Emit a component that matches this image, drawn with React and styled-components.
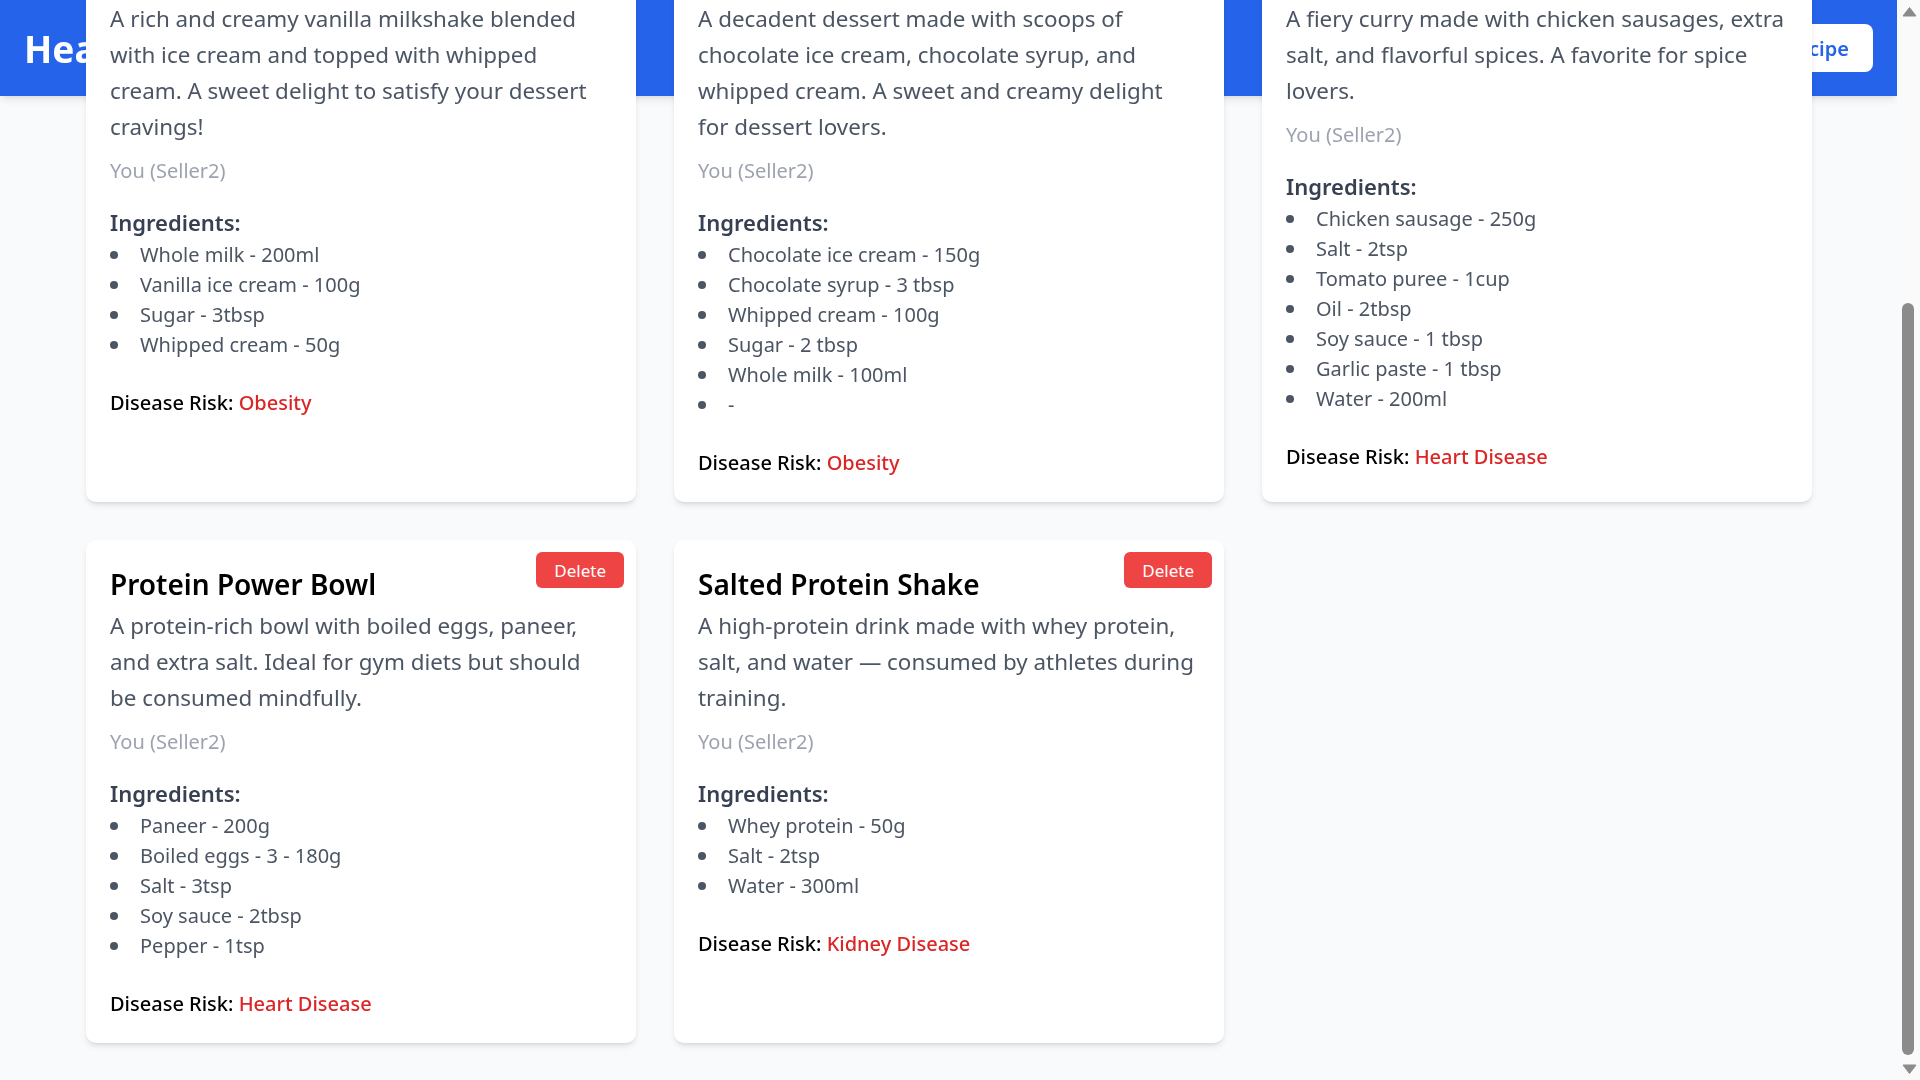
import { useLayoutEffect, useRef, useState } from 'react';
import styled, { createGlobalStyle } from 'styled-components';

const recipes = [
  {
    id: 1,
    title: 'Vanilla Milkshake',
    lines: [
      'A rich and creamy vanilla milkshake blended',
      'with ice cream and topped with whipped',
      'cream. A sweet delight to satisfy your dessert',
      'cravings!',
    ],
    ingredients: [
      ['Whole milk', '200ml'],
      ['Vanilla ice cream', '100g'],
      ['Sugar', '3tbsp'],
      ['Whipped cream', '50g'],
    ],
    risk: 'Obesity',
  },
  {
    id: 2,
    title: 'Chocolate Sundae',
    lines: [
      'A decadent dessert made with scoops of',
      'chocolate ice cream, chocolate syrup, and',
      'whipped cream. A sweet and creamy delight',
      'for dessert lovers.',
    ],
    ingredients: [
      ['Chocolate ice cream', '150g'],
      ['Chocolate syrup', '3 tbsp'],
      ['Whipped cream', '100g'],
      ['Sugar', '2 tbsp'],
      ['Whole milk', '100ml'],
      ['', ''],
    ],
    risk: 'Obesity',
  },
  {
    id: 3,
    title: 'Spicy Sausage Curry',
    lines: [
      'A fiery curry made with chicken sausages, extra',
      'salt, and flavorful spices. A favorite for spice',
      'lovers.',
    ],
    ingredients: [
      ['Chicken sausage', '250g'],
      ['Salt', '2tsp'],
      ['Tomato puree', '1cup'],
      ['Oil', '2tbsp'],
      ['Soy sauce', '1 tbsp'],
      ['Garlic paste', '1 tbsp'],
      ['Water', '200ml'],
    ],
    risk: 'Heart Disease',
  },
  {
    id: 4,
    title: 'Protein Power Bowl',
    lines: [
      'A protein-rich bowl with boiled eggs, paneer,',
      'and extra salt. Ideal for gym diets but should',
      'be consumed mindfully.',
    ],
    ingredients: [
      ['Paneer', '200g'],
      ['Boiled eggs - 3', '180g'],
      ['Salt', '3tsp'],
      ['Soy sauce', '2tbsp'],
      ['Pepper', '1tsp'],
    ],
    risk: 'Heart Disease',
  },
  {
    id: 5,
    title: 'Salted Protein Shake',
    lines: [
      'A high-protein drink made with whey protein,',
      'salt, and water — consumed by athletes during',
      'training.',
    ],
    ingredients: [
      ['Whey protein', '50g'],
      ['Salt', '2tsp'],
      ['Water', '300ml'],
    ],
    risk: 'Kidney Disease',
  },
];

const GlobalStyle = createGlobalStyle`
  * { box-sizing: border-box; }
  html, body { margin: 0; padding: 0; height: 100%; overflow: hidden; }
  body {
    font-family: "Noto Sans", "Open Sans", sans-serif;
    background: #f9fafb;
  }
  #root { height: 100%; }
`;

function RecipeCard({ recipe }) {
  return (
    <StyledCard>
      <StyledDelete type="button">Delete</StyledDelete>
      <StyledTitle>{recipe.title}</StyledTitle>
      <StyledDesc>
        {recipe.lines.map((line, i) => (
          <span key={i}>
            {line}
            {i < recipe.lines.length - 1 && <br />}
          </span>
        ))}
      </StyledDesc>
      <StyledSeller>You (Seller2)</StyledSeller>
      <StyledIngTitle>Ingredients:</StyledIngTitle>
      <StyledIngList>
        {recipe.ingredients.map(([name, qty], i) => (
          <li key={i}>{`${name} - ${qty}`.trim()}</li>
        ))}
      </StyledIngList>
      <StyledRisk>
        Disease Risk: <StyledRiskValue>{recipe.risk}</StyledRiskValue>
      </StyledRisk>
    </StyledCard>
  );
}

function Arrow({ down }) {
  return (
    <StyledArrowBox>
      <svg width="15" height="10" viewBox="0 0 15 10">
        <path
          d={down ? 'M1 1 H14 L7.5 9.5 Z' : 'M1 9 H14 L7.5 0.5 Z'}
          fill="#8b8b8b"
          stroke="#8b8b8b"
          strokeWidth="1"
          strokeLinejoin="round"
        />
      </svg>
    </StyledArrowBox>
  );
}

export default function App() {
  const pageRef = useRef(null);
  const trackRef = useRef(null);
  const [thumb, setThumb] = useState({ top: 0, height: 0 });

  const syncThumb = () => {
    const el = pageRef.current;
    const track = trackRef.current;
    if (!el || !track) return;
    const len = track.clientHeight - 4;
    setThumb({
      top: (el.scrollTop / el.scrollHeight) * len,
      height: (el.clientHeight / el.scrollHeight) * len,
    });
  };

  useLayoutEffect(() => {
    const el = pageRef.current;
    const toBottom = () => {
      el.scrollTop = el.scrollHeight;
      syncThumb();
    };
    toBottom();
    if (document.fonts) document.fonts.ready.then(toBottom);
  }, []);

  return (
    <StyledShell>
      <GlobalStyle />
      <StyledPage ref={pageRef} onScroll={syncThumb}>
        <StyledHeader>
          <StyledBrand>Healthy Recipes</StyledBrand>
          <StyledAddButton type="button">+ Add Recipe</StyledAddButton>
        </StyledHeader>
        <StyledMain>
          <StyledIntro>
            <StyledPageTitle>My Recipes</StyledPageTitle>
            <StyledPageSub>Recipes you have listed as Seller2</StyledPageSub>
          </StyledIntro>
          <StyledToolbar>
            <StyledSearch type="text" placeholder="Search recipes..." />
          </StyledToolbar>
          <StyledGrid>
            {recipes.map((r) => (
              <RecipeCard key={r.id} recipe={r} />
            ))}
          </StyledGrid>
        </StyledMain>
      </StyledPage>
      <StyledRail>
        <Arrow />
        <StyledTrack ref={trackRef}>
          <StyledThumb style={{ marginTop: thumb.top, height: thumb.height }} />
        </StyledTrack>
        <Arrow down />
      </StyledRail>
    </StyledShell>
  );
}

const StyledShell = styled.div`
  display: flex;
  height: 100vh;
`;

const StyledPage = styled.div`
  flex: 1;
  min-width: 0;
  overflow-y: scroll;
  background: #f9fafb;
  scrollbar-width: none;

  &::-webkit-scrollbar {
    display: none;
  }
`;

const StyledRail = styled.div`
  display: flex;
  flex-direction: column;
  width: 23px;
  flex-shrink: 0;
  background: #fafafa;
`;

const StyledArrowBox = styled.div`
  display: flex;
  align-items: center;
  justify-content: center;
  height: 23px;
  padding-left: 1px;
`;

const StyledTrack = styled.div`
  flex: 1;
  display: flex;
  flex-direction: column;
  padding: 2px 6px 2px 5px;
`;

const StyledThumb = styled.div`
  width: 12px;
  border-radius: 6px;
  background: #8b8b8b;
`;

const StyledHeader = styled.header`
  position: sticky;
  top: 0;
  height: 96px;
  display: flex;
  align-items: center;
  justify-content: space-between;
  padding: 0 24px;
  background: #2563eb;
  box-shadow: 0 5px 8px -2px rgba(0, 0, 0, 0.1), 0 2px 5px -2px rgba(0, 0, 0, 0.08);
`;

const StyledBrand = styled.h1`
  margin: 0;
  color: #ffffff;
  font-size: 37px;
  font-weight: 700;
`;

const StyledAddButton = styled.button`
  height: 48px;
  padding: 0 24px;
  border: none;
  border-radius: 8px;
  background: #ffffff;
  color: #2563eb;
  font-family: inherit;
  font-size: 20px;
  font-weight: 600;
`;

const StyledMain = styled.main`
  padding: 38px 85px 37px 86px;
`;

const StyledIntro = styled.div`
  display: flex;
  flex-direction: column;
  gap: 8px;
  margin-bottom: 38px;
`;

const StyledPageTitle = styled.h2`
  margin: 0;
  font-size: 30px;
  line-height: 45px;
  color: #1f2937;
`;

const StyledPageSub = styled.p`
  margin: 0;
  font-size: 20px;
  line-height: 30px;
  color: #6b7280;
`;

const StyledToolbar = styled.div`
  display: flex;
  margin-bottom: 28px;
`;

const StyledSearch = styled.input`
  width: 480px;
  height: 50px;
  padding: 0 18px;
  border: 1px solid #d1d5db;
  border-radius: 8px;
  font-family: inherit;
  font-size: 20px;
`;

const StyledGrid = styled.div`
  display: grid;
  grid-template-columns: repeat(3, 1fr);
  gap: 38px;
`;

const StyledCard = styled.article`
  position: relative;
  padding: 24px;
  background: #ffffff;
  border-radius: 10px;
  box-shadow: 0 4px 6px -1px rgba(0, 0, 0, 0.1), 0 2px 4px -2px rgba(0, 0, 0, 0.1);
`;

const StyledDelete = styled.button`
  position: absolute;
  top: 12px;
  right: 12px;
  height: 36px;
  padding: 0 18px;
  border: none;
  border-radius: 6px;
  background: #ef4444;
  color: #ffffff;
  font-family: inherit;
  font-size: 17px;
`;

const StyledTitle = styled.h3`
  margin: 0 0 4px;
  font-size: 28px;
  line-height: 40px;
  font-weight: 600;
  color: #000000;
`;

const StyledDesc = styled.p`
  margin: 0;
  font-size: 22.4px;
  line-height: 36px;
  color: #4b5563;
  white-space: nowrap;
`;

const StyledSeller = styled.p`
  margin: 11px 0 0;
  font-size: 20px;
  line-height: 30px;
  color: #9ca3af;
`;

const StyledIngTitle = styled.h4`
  margin: 18px 0 0;
  font-size: 22px;
  line-height: 36px;
  font-weight: 600;
  color: #374151;
`;

const StyledIngList = styled.ul`
  margin: 0;
  padding: 0;
  list-style: none;

  li {
    display: flex;
    align-items: center;
    gap: 22px;
    font-size: 20px;
    line-height: 30px;
    color: #4b5563;
  }

  li::before {
    content: '';
    flex-shrink: 0;
    width: 8px;
    height: 8px;
    border-radius: 50%;
    background: #4b5563;
  }
`;

const StyledRisk = styled.p`
  margin: 28px 0 0;
  font-size: 20px;
  line-height: 30px;
  font-weight: 500;
  color: #000000;
`;

const StyledRiskValue = styled.span`
  color: #dc2626;
`;
